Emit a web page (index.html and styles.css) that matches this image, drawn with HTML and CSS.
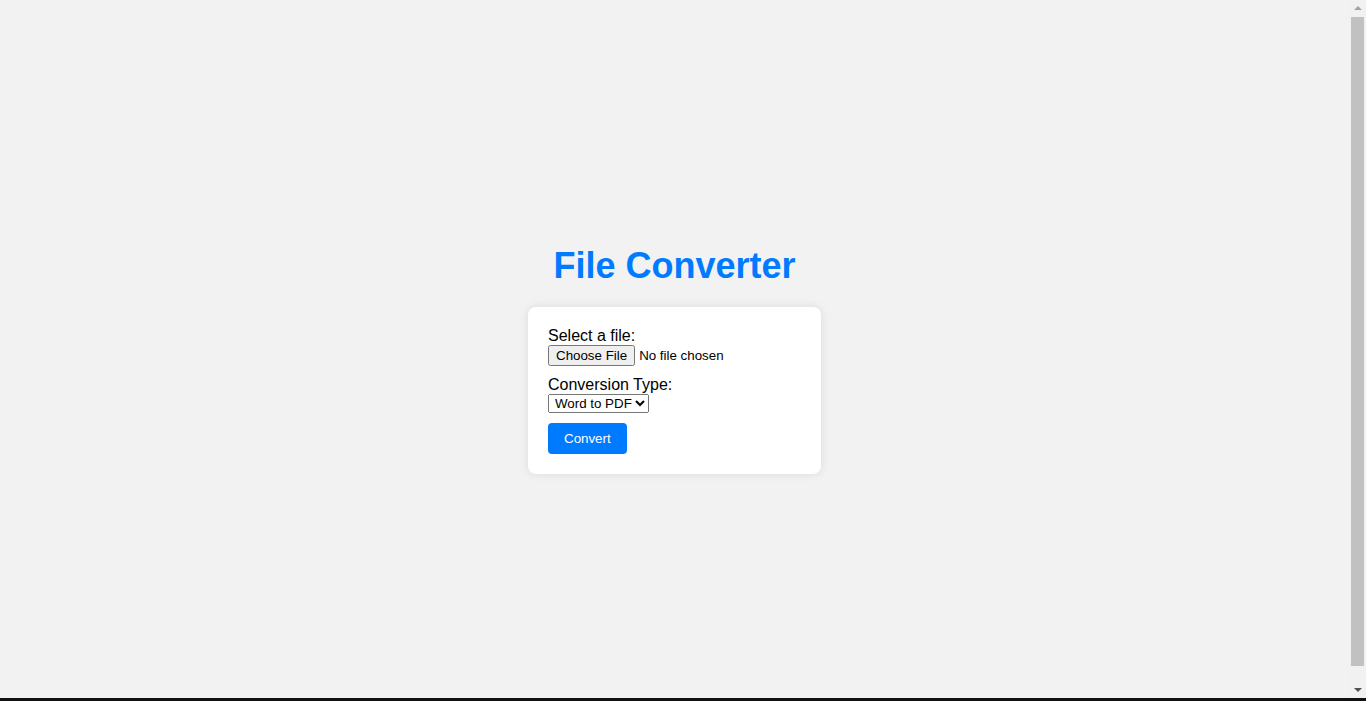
FILE: index.html
```html
<!DOCTYPE html>
<html lang="en">
<head>
<meta charset="utf-8">
<title>File Converter</title>
<link rel="stylesheet" href="styles.css">
</head>
<body>
  <h1 class="title">File Converter</h1>
  <form class="card">
    <label class="field-label" for="file">Select a file:</label>
    <input class="field" type="file" id="file">
    <label class="field-label" for="type">Conversion Type:</label>
    <select class="field select" id="type">
      <option>Word to PDF</option>
      <option>PDF to Word</option>
    </select>
    <button class="convert" type="button">Convert</button>
  </form>
  <div class="scrollbar" aria-hidden="true">
    <span class="arrow arrow-up"></span>
    <span class="thumb"></span>
    <span class="arrow arrow-down"></span>
  </div>
  <div class="bottom-edge"></div>
</body>
</html>
```

FILE: styles.css
```css
html {
  background: #f2f2f2;
}

body {
  margin: 8px 25px 8px 8px;
  padding-top: 1px;
  height: 100vh;
  display: flex;
  flex-direction: column;
  align-items: center;
  justify-content: center;
  font-family: "Liberation Sans", Arial, sans-serif;
  background: #f2f2f2;
}

.title {
  margin: 0 0 20px;
  font-size: 36px;
  font-weight: bold;
  color: #007bff;
}

.card {
  width: 253px;
  padding: 20px;
  background: #ffffff;
  border-radius: 8px;
  box-shadow: 0 0 10px rgba(0, 0, 0, 0.1);
}

.field-label {
  display: block;
  font-size: 16px;
  color: #000;
}

.field {
  display: block;
  margin-bottom: 10px;
  font-family: "Liberation Sans", Arial, sans-serif;
  font-size: 13.33px;
}

.select {
  padding-left: 2px;
}

.convert {
  display: block;
  padding: 8px 16px;
  border: none;
  border-radius: 4px;
  background: #007bff;
  color: #ffffff;
  font-family: "Liberation Sans", Arial, sans-serif;
  font-size: 13.33px;
  cursor: pointer;
}

.scrollbar {
  position: fixed;
  top: 0;
  right: 0;
  bottom: 3px;
  width: 17px;
  background: #f1f1f1;
}

.thumb {
  position: absolute;
  top: 17px;
  left: 2px;
  right: 2px;
  height: 649px;
  background: #c1c1c1;
}

.arrow {
  position: absolute;
  left: 5px;
  width: 0;
  height: 0;
  border-left: 4px solid transparent;
  border-right: 4px solid transparent;
}

.arrow-up {
  top: 6px;
  border-bottom: 4px solid #a3a3a3;
}

.arrow-down {
  bottom: 6px;
  border-top: 4px solid #505050;
}

.bottom-edge {
  position: fixed;
  left: 0;
  right: 0;
  bottom: 0;
  height: 3px;
  background: #111111;
}
```
